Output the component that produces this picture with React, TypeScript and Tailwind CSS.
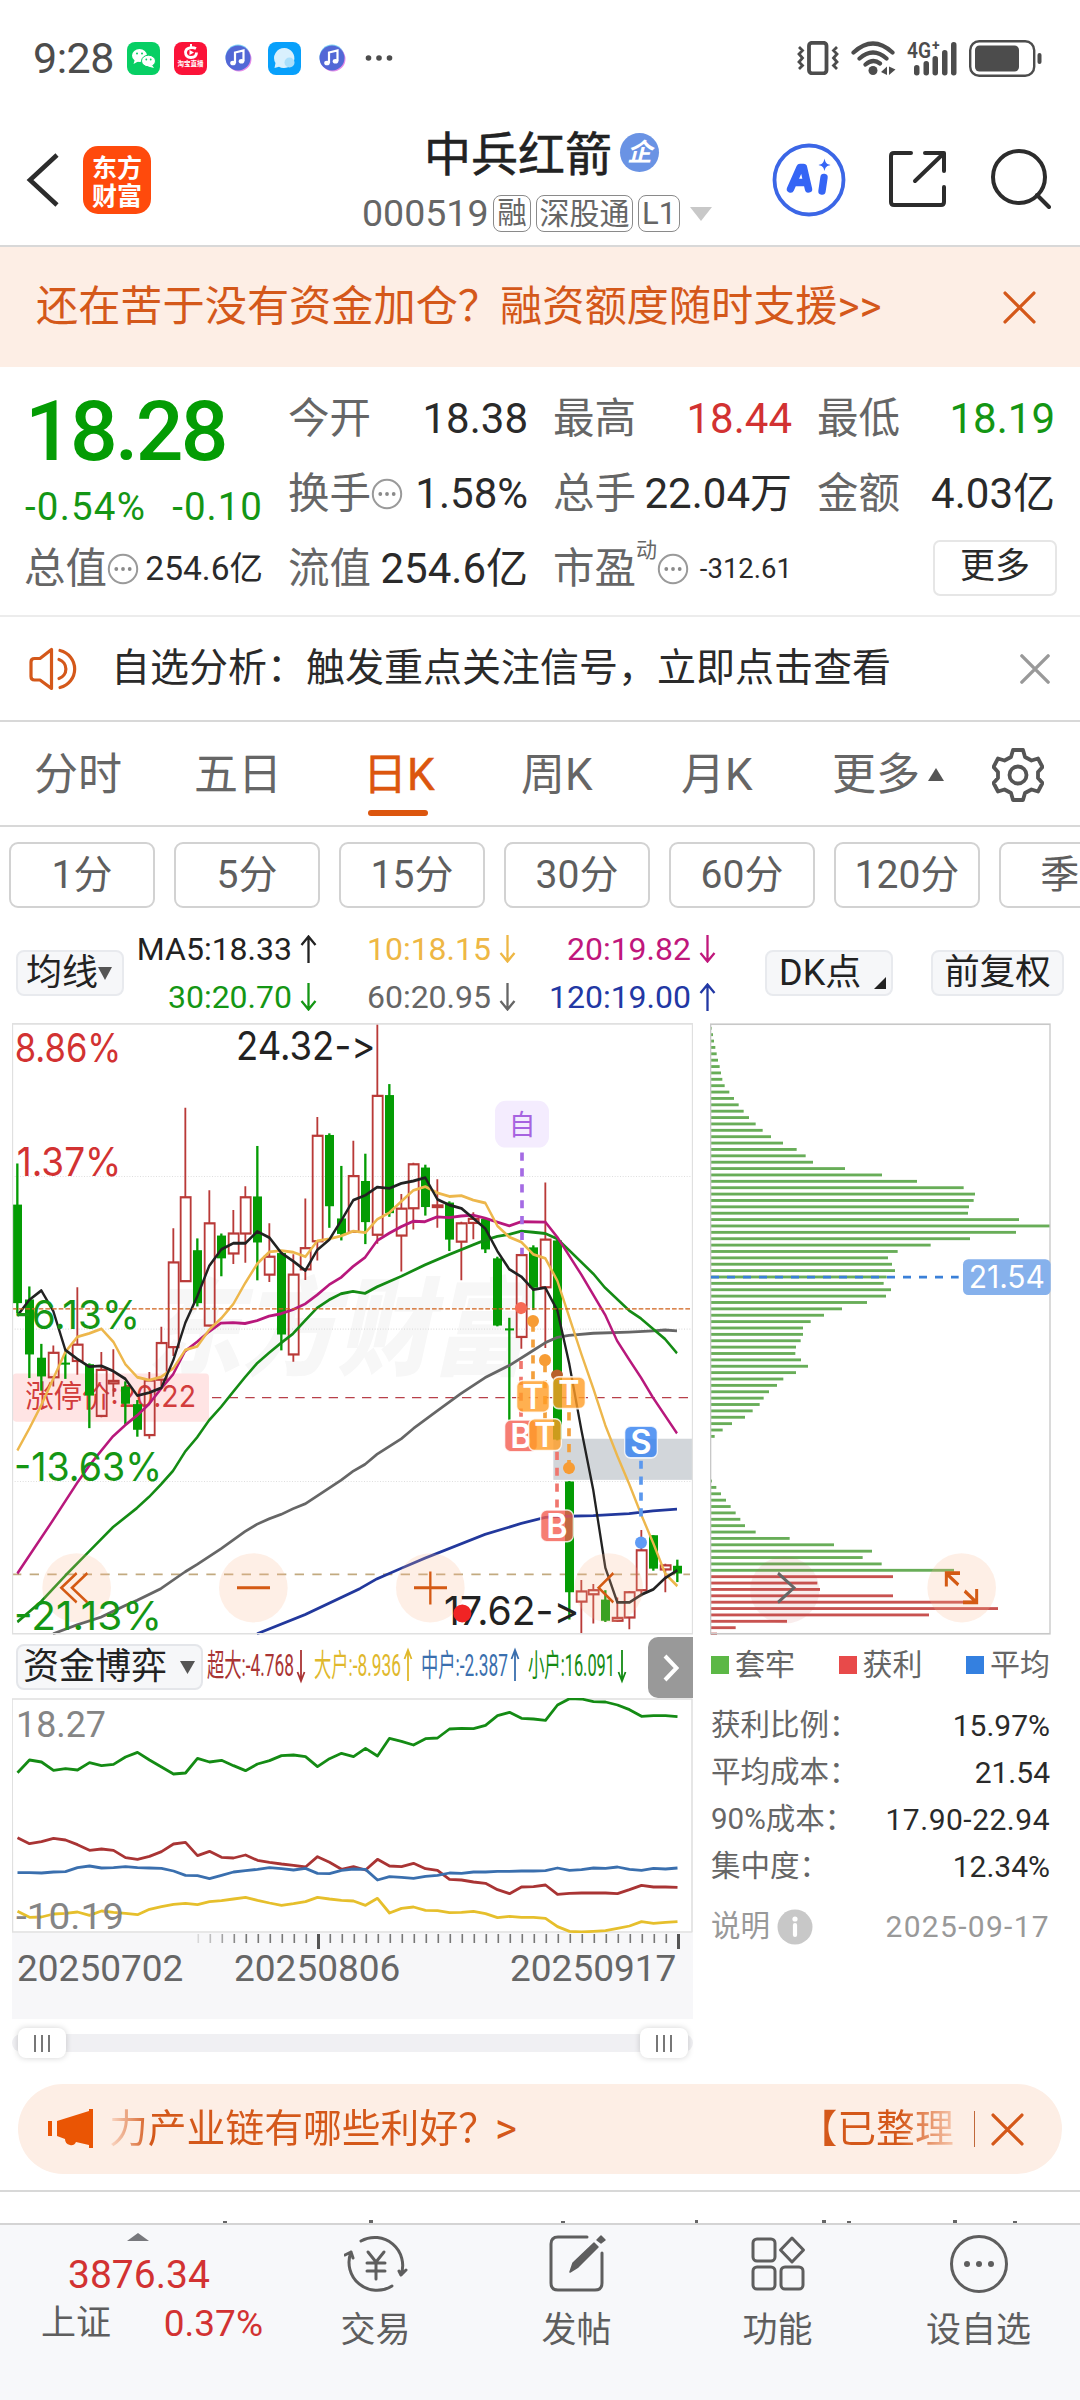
import React from "react";

type Point = [number, number];

/* ---------- chart data (chart units, 36 units per trading day) ---------- */

// kind, high, body top, body bottom, low
const CANDLES: [string, number, number, number, number][] = [
  ["g", 377, 478, 720, 745], ["g", 679, 711, 846, 904], ["g", 820, 854, 900, 935], ["r", 824, 842, 902, 925],
  ["g", 838, 866, 871, 906], ["r", 681, 822, 862, 896], ["g", 868, 870, 947, 1027], ["r", 840, 884, 997, 1000],
  ["r", 833, 911, 917, 950], ["g", 912, 925, 967, 1018], ["g", 958, 968, 1031, 1048], ["r", 889, 910, 1044, 1053],
  ["r", 778, 818, 908, 925], ["r", 536, 620, 828, 850], ["r", 240, 460, 666, 668], ["g", 561, 590, 720, 728],
  ["r", 443, 524, 775, 777], ["g", 549, 554, 610, 654], ["r", 491, 549, 598, 624], ["r", 433, 460, 549, 621],
  ["g", 334, 458, 571, 664], ["r", 524, 606, 650, 668], ["g", 590, 597, 797, 836], ["r", 600, 650, 846, 864],
  ["r", 463, 585, 637, 663], ["r", 263, 309, 568, 615], ["g", 303, 307, 482, 535], ["g", 383, 512, 550, 566],
  ["r", 321, 408, 545, 547], ["g", 353, 420, 521, 575], ["r", 34, 211, 552, 574], ["g", 182, 209, 499, 508],
  ["r", 452, 488, 554, 642], ["r", 375, 379, 487, 539], ["g", 380, 387, 484, 505], ["r", 416, 480, 484, 535],
  ["g", 470, 473, 564, 592], ["r", 520, 524, 569, 664], ["r", 497, 513, 523, 563], ["g", 513, 513, 588, 597],
  ["g", 606, 610, 775, 777], ["g", 756, 782, 787, 1009], ["r", 600, 602, 803, 832], ["g", 578, 583, 682, 737],
  ["r", 424, 564, 681, 830], ["g", 562, 566, 1055, 1057], ["g", 1157, 1158, 1430, 1497], ["r", 1400, 1428, 1453, 1532],
  ["r", 1410, 1425, 1435, 1507], ["g", 1425, 1448, 1500, 1503], ["r", 1443, 1493, 1500, 1502], ["r", 1427, 1430, 1492, 1521],
  ["r", 1277, 1327, 1425, 1440], ["g", 1290, 1290, 1372, 1377], ["r", 1360, 1364, 1374, 1430], ["g", 1350, 1365, 1384, 1405],
];

const MA5 = [751, 712, 689, 740, 835, 857, 876, 874, 887, 906, 947, 940, 928, 860, 768, 703, 628, 588, 573, 573, 544, 559, 597, 617, 640, 589, 564, 517, 467, 455, 435, 438, 426, 420, 412, 465, 479, 487, 512, 537, 592, 637, 655, 687, 682, 738, 870, 1031, 1180, 1370, 1455, 1455, 1436, 1423, 1395, 1376];
const MA10 = [1082, 1028, 970, 905, 840, 803, 794, 783, 815, 870, 902, 909, 901, 880, 835, 826, 785, 757, 722, 670, 623, 594, 591, 595, 606, 567, 562, 555, 543, 547, 514, 498, 470, 443, 434, 449, 458, 456, 467, 474, 530, 558, 570, 600, 610, 665, 755, 845, 930, 1020, 1095, 1165, 1240, 1310, 1385, 1415];
const MA20: Point[] = [[52, 1384], [159, 1253], [231, 1162], [267, 1120], [303, 1083], [339, 1047], [375, 1020], [411, 996], [447, 968], [483, 930], [519, 895], [555, 838], [591, 815], [627, 790], [663, 769], [699, 768], [735, 770], [771, 763], [807, 752], [843, 746], [879, 736], [915, 722], [951, 700], [987, 675], [1023, 657], [1059, 630], [1095, 608], [1131, 567], [1168, 548], [1204, 532], [1239, 519], [1275, 520], [1311, 508], [1347, 510], [1383, 506], [1419, 504], [1455, 511], [1492, 521], [1528, 530], [1564, 520], [1636, 521], [1672, 558], [1744, 650], [1815, 748], [1851, 812], [1887, 858], [1923, 903], [1959, 952], [2031, 1040]];
const MA30: Point[] = [[52, 1503], [123, 1453], [195, 1390], [267, 1330], [339, 1270], [411, 1223], [447, 1196], [483, 1165], [519, 1132], [555, 1085], [591, 1050], [627, 1008], [663, 975], [699, 938], [735, 902], [771, 868], [807, 842], [843, 818], [879, 795], [915, 763], [951, 732], [987, 712], [1023, 697], [1059, 691], [1095, 696], [1131, 680], [1204, 654], [1275, 626], [1347, 601], [1419, 577], [1455, 565], [1492, 556], [1528, 551], [1564, 543], [1600, 546], [1636, 549], [1672, 562], [1707, 590], [1780, 648], [1815, 682], [1887, 738], [1923, 758], [1959, 783], [1995, 808], [2031, 843]];
const MA60: Point[] = [[159, 1532], [231, 1510], [303, 1491], [375, 1463], [411, 1450], [483, 1421], [555, 1380], [591, 1362], [663, 1323], [735, 1281], [771, 1263], [807, 1250], [843, 1239], [879, 1225], [915, 1213], [1023, 1155], [1059, 1133], [1095, 1116], [1131, 1091], [1204, 1053], [1240, 1028], [1311, 985], [1383, 942], [1455, 903], [1528, 873], [1600, 836], [1636, 817], [1672, 804], [1707, 799], [1780, 794], [1887, 791], [1959, 788], [1995, 786], [2031, 788]];
const MA120: Point[] = [[771, 1532], [915, 1485], [1080, 1421], [1131, 1397], [1204, 1371], [1275, 1346], [1455, 1288], [1564, 1261], [1636, 1246], [1672, 1244], [1780, 1242], [1887, 1237], [1959, 1230], [2031, 1226]];

const CHIPS = [65, 69, 72, 76, 80, 84, 89, 93, 97, 104, 118, 132, 146, 161, 177, 197, 218, 243, 279, 320, 347, 369, 465, 576, 681, 821, 855, 851, 837, 834, 987, 1080, 978, 840, 722, 623, 594, 606, 615, 590, 581, 603, 588, 531, 456, 402, 362, 339, 339, 332, 318, 316, 333, 354, 318, 280, 261, 237, 221, 209, 188, 165, 126, 98, 74, 0, 0, 0, 0, 0, 0, 66, 79, 93, 108, 122, 137, 151, 165, 197, 299, 432, 546, 518, 575, 792, 609, 382, 390, 609, 850, 924, 717, 291, 137, 81];

const FLOW = [
  { color: "#a93434", v: [623, 641, 635, 625, 630, 644, 661, 657, 661, 683, 688, 679, 665, 642, 637, 677, 664, 682, 684, 675, 691, 697, 702, 706, 711, 680, 697, 718, 710, 720, 688, 708, 710, 700, 716, 721, 748, 750, 756, 760, 779, 791, 771, 770, 765, 793, 790, 789, 789, 789, 791, 779, 766, 771, 771, 772] },
  { color: "#3a6fae", v: [728, 728, 729, 726, 725, 713, 708, 714, 713, 710, 713, 714, 715, 723, 736, 737, 746, 736, 726, 722, 718, 713, 716, 720, 715, 730, 731, 721, 717, 718, 750, 740, 742, 745, 739, 736, 729, 730, 726, 726, 724, 724, 723, 723, 722, 714, 721, 719, 714, 715, 711, 718, 721, 715, 717, 714] },
  { color: "#e6bf2c", v: [844, 862, 861, 852, 850, 846, 856, 843, 847, 850, 854, 838, 830, 823, 820, 824, 815, 812, 807, 802, 811, 819, 826, 821, 815, 802, 807, 811, 813, 826, 805, 849, 835, 831, 841, 842, 848, 847, 844, 851, 863, 859, 862, 862, 865, 890, 904, 906, 904, 902, 895, 888, 875, 880, 877, 875] },
  { color: "#148b14", v: [428, 390, 396, 421, 416, 420, 398, 407, 403, 381, 367, 390, 411, 432, 429, 385, 396, 391, 407, 422, 402, 392, 377, 375, 380, 410, 386, 370, 380, 355, 378, 325, 334, 345, 326, 324, 297, 295, 296, 286, 257, 247, 265, 267, 271, 225, 206, 207, 215, 216, 225, 239, 259, 257, 257, 260] },
];

const daily = (v: number[]): Point[] => v.map((y, i) => [52 + 36 * i, y]);
const toPoints = (p: Point[]) => p.map((q) => q.join(",")).join(" ");

/* ---------- small pieces ---------- */

function Cross({ className, size, width = 3.2 }: { className: string; size: number; width?: number }) {
  return (
    <svg className={className} width={size} height={size} viewBox="0 0 32 32" fill="none" stroke="currentColor" strokeWidth={width} strokeLinecap="round">
      <path d="M2 2L30 30M30 2L2 30" />
    </svg>
  );
}

function Dots() {
  return (
    <svg className="shrink-0" width="32" height="32" viewBox="0 0 32 32">
      <circle cx="16" cy="16" r="14.200" fill="none" stroke="#9a9a9a" strokeWidth="2" />
      <circle cx="9.300" cy="16" r="1.900" fill="#8a8a8a" />
      <circle cx="16" cy="16" r="1.900" fill="#8a8a8a" />
      <circle cx="22.700" cy="16" r="1.900" fill="#8a8a8a" />
    </svg>
  );
}

function Arrow({ up }: { up: boolean }) {
  return (
    <svg className="ml-2 shrink-0" width="17" height="28" viewBox="0 0 17 28" fill="none" stroke="currentColor" strokeWidth="2.300">
      {up ? <path d="M8.5 28V1.5M1.5 10L8.5 1.5L15.5 10" /> : <path d="M8.5 0V26.500M1.5 18L8.5 26.500L15.5 18" />}
    </svg>
  );
}

function MusicIcon({ className }: { className: string }) {
  return (
    <svg className={className} width="28" height="28" viewBox="0 0 28 28">
      <circle cx="14" cy="13" r="12.500" fill="#7fd4f5" />
      <circle cx="15" cy="15" r="12.500" fill="#e58be8" />
      <circle cx="14" cy="14" r="12.500" fill="#5268d6" />
      <path d="M11 19V8.500L19.500 6.500V17" fill="none" stroke="#fff" strokeWidth="2.200" />
      <ellipse cx="9" cy="19" rx="2.800" ry="2.300" fill="#fff" />
      <ellipse cx="17.500" cy="17.200" rx="2.800" ry="2.300" fill="#fff" />
    </svg>
  );
}

/* ---------- top ---------- */

function StatusBar() {
  return (
    <div className="flex h-[116px] shrink-0 items-center text-[#4c4c4c]">
      <span className="ml-[33px] w-[83px] text-[43px] leading-none whitespace-nowrap tracking-[-0.5px]">9:28</span>
      <svg className="ml-[11px]" width="33" height="33" viewBox="0 0 33 33">
        <rect width="33" height="33" rx="8" fill="#07cf64" />
        <ellipse cx="12.500" cy="13.500" rx="7.500" ry="6.500" fill="#fff" />
        <path d="M8 17L6.500 22L12 19Z" fill="#fff" />
        <ellipse cx="21.500" cy="19" rx="7" ry="5.800" fill="#fff" stroke="#07cf64" strokeWidth="1" />
        <path d="M25 23L27 26L21 24.500Z" fill="#fff" />
        <circle cx="10" cy="11.500" r="1" fill="#07cf64" /><circle cx="15" cy="11.500" r="1" fill="#07cf64" />
        <circle cx="19.300" cy="17.500" r=".9" fill="#07cf64" /><circle cx="23.700" cy="17.500" r=".9" fill="#07cf64" />
      </svg>
      <div className="ml-[14px] flex size-[33px] flex-col items-center rounded-[8px] bg-[#fb1339] text-white">
        <svg className="mt-[2px]" width="16" height="15" viewBox="0 0 16 15" fill="none" stroke="#fff">
          <path d="M13 4.500C10 3 3 3 2.500 8C2.500 13 6 13.500 8 13.500C11 13.500 13.500 12 13.500 8.500" strokeWidth="2.800" />
          <path d="M6.500 6L11 8.500L6.500 11Z" fill="#fff" stroke="none" />
          <path d="M8 0V4" strokeWidth="2" />
        </svg>
        <span className="mt-px text-[6.500px] font-bold leading-[8px] whitespace-nowrap">淘宝直播</span>
      </div>
      <MusicIcon className="ml-[17px]" />
      <svg className="ml-[16px]" width="33" height="33" viewBox="0 0 33 33">
        <rect width="33" height="33" rx="8" fill="#08a0fb" />
        <path d="M16.500 6A10.300 10 0 1 1 11 24.700L6.500 26L7.500 21A10.300 10 0 0 1 16.500 6Z" fill="#d9f0fd" />
        <circle cx="21.500" cy="20.500" r="5" fill="#aadffb" />
      </svg>
      <MusicIcon className="ml-[17px]" />
      <svg className="ml-[19px]" width="28" height="8" viewBox="0 0 28 8" fill="#4c4c4c">
        <circle cx="3.500" cy="4" r="2.800" /><circle cx="14" cy="4" r="2.800" /><circle cx="24.500" cy="4" r="2.800" />
      </svg>
      <svg className="ml-auto" width="42" height="34" viewBox="0 0 42 34" fill="none" stroke="#4c4c4c" strokeWidth="2.800">
        <rect x="12" y="1.800" width="17.500" height="30.500" rx="3" strokeWidth="3.800" />
        <path d="M2 6L5.500 9.500L2 13L5.500 17L2 21L5.500 24.500L2 28M40 6L36.500 9.500L40 13L36.500 17L40 21L36.500 24.500L40 28" />
      </svg>
      <svg className="ml-[12px]" width="45" height="35" viewBox="0 0 45 35" fill="none" stroke="#4c4c4c" strokeWidth="4.200" strokeLinecap="round">
        <path d="M2.500 11.500Q22 -6.500 41.500 11.500M8.500 17.500Q22 5.500 35.500 17.500M14.500 23.500Q22 17 29 22.500" />
        <circle cx="22" cy="29.500" r="4.500" fill="#4c4c4c" stroke="none" />
        <path d="M36 25.500V34L30 31ZM38 34V25.500L44.500 28.500Z" fill="#4c4c4c" stroke="none" />
      </svg>
      <svg className="ml-[11px] overflow-visible" width="50" height="35" viewBox="0 0 50 35" fill="#4c4c4c">
        <rect x="7" y="24" width="5.500" height="10.500" rx="2.700" /><rect x="16.500" y="20" width="5.500" height="14.500" rx="2.700" />
        <rect x="25.500" y="15" width="5.500" height="19.500" rx="2.700" /><rect x="35" y="9" width="5.500" height="25.500" rx="2.700" />
        <rect x="44" y="1" width="5.500" height="33.500" rx="2.700" />
        <text x="0" y="17" fontSize="22" fontWeight="600" textLength="24" lengthAdjust="spacingAndGlyphs">4G</text>
        <text x="25" y="9" fontSize="14" fontWeight="700">+</text>
      </svg>
      <svg className="mr-[37px] ml-[12px]" width="74" height="37" viewBox="0 0 74 37">
        <rect x="1.200" y="1.200" width="64" height="34.600" rx="9" fill="none" stroke="#4c4c4c" strokeWidth="2.400" />
        <rect x="6" y="5.500" width="44" height="26" rx="4.500" fill="#4c4c4c" />
        <rect x="68.500" y="13" width="4" height="11" rx="2" fill="#4c4c4c" />
      </svg>
    </div>
  );
}

function Header() {
  return (
    <div className="flex h-[131px] shrink-0 border-b-2 border-[#d8d8d8] text-[#222]">
      <svg className="mt-[37px] ml-[26px]" width="34" height="54" viewBox="0 0 34 54" fill="none" stroke="#2c2c2c" strokeWidth="4.600">
        <path d="M31 2L4 27L31 52" />
      </svg>
      <div className="mt-[30px] ml-[23px] flex h-[68px] w-[68px] flex-col items-center justify-center rounded-[15px] bg-[#ff4a0c] text-[25px] leading-[28px] font-bold text-white [font-family:'Noto_Sans_CJK_SC',sans-serif]">
        <span>东方</span>
        <span>财富</span>
      </div>
      <div className="ml-[211px] flex w-[362px] flex-col">
        <div className="flex items-center pl-[62px]">
          <span className="mt-[12px] text-[47px] leading-[54px] whitespace-nowrap [-webkit-text-stroke:0.5px_#222]">中兵红箭</span>
          <span className="mt-[6px] ml-[8px] flex size-[39px] items-center justify-center rounded-full bg-[#6a93e4] text-[25px] leading-none font-bold text-white italic">企</span>
        </div>
        <div className="mt-[13px] flex items-center text-[#666]">
          <span className="w-[131px] text-[37.500px] leading-none">000519</span>
          <span className="flex h-[37px] w-[38px] items-center justify-center rounded-[8px] border border-[#8a8a8a] text-[29.500px] leading-none">融</span>
          <span className="ml-[5px] flex h-[37px] w-[97px] items-center justify-center rounded-[8px] border border-[#8a8a8a] text-[30px] leading-none whitespace-nowrap">深股通</span>
          <span className="ml-[5px] flex h-[37px] w-[42px] items-center justify-center rounded-[8px] border border-[#8a8a8a] text-[31px] leading-none">L1</span>
          <svg className="ml-[10px]" width="22" height="14" viewBox="0 0 22 14"><path d="M0 0H22L11 14Z" fill="#c8c8c8" /></svg>
        </div>
      </div>
      <svg className="mt-[27px] ml-[48px]" width="74" height="74" viewBox="0 0 74 74">
        <circle cx="37" cy="37" r="34.500" fill="none" stroke="#3b66e6" strokeWidth="3.800" />
        <g fill="none" stroke="#3565f5" strokeWidth="7.400" strokeLinejoin="round" strokeLinecap="round">
          <path d="M18.500 46L28 24.500H31.500L36.500 46M25 39.500H33" />
          <path d="M52 34.500L50 48" />
        </g>
        <path d="M52.500 15.500C53.500 20 54.500 21 58.500 22C54.500 23 53.500 24 52.500 28C51.500 24 50.500 23 46.500 22C50.500 21 51.500 20 52.500 15.500Z" fill="#3565f5" />
      </svg>
      <svg className="mt-[34px] ml-[42px]" width="60" height="60" viewBox="0 0 60 60" fill="none" stroke="#2c2c2c" strokeWidth="4" strokeLinecap="round" strokeLinejoin="round">
        <path d="M23 3H6Q3 3 3 6V52Q3 55 6 55H53Q56 55 56 52V37M37 3H56V21M55 4L27 31" />
      </svg>
      <svg className="mt-[32px] ml-[41px]" width="62" height="62" viewBox="0 0 62 62" fill="none" stroke="#2c2c2c" strokeWidth="4" strokeLinecap="round">
        <circle cx="30" cy="29" r="26" />
        <path d="M48 47L60 59" />
      </svg>
    </div>
  );
}

/* ---------- quotes ---------- */

function Quote({ label, value, tone = "text-[#2a2a2a]", children }: { label: string; value: string; tone?: string; children?: React.ReactNode }) {
  return (
    <div className="flex items-center">
      <span className="ml-[-1px] text-[41.500px] text-[#666]">{label}</span>
      {children}
      <span className={"ml-auto text-[42px] " + tone}>{value}</span>
    </div>
  );
}

function Quotes() {
  return (
    <div className="flex h-[250px] shrink-0 gap-[26px] border-b-2 border-[#ececec] pl-[25px] leading-none whitespace-nowrap">
      <div className="w-[238px]">
        <div className="mt-[21px] h-[88px] text-[84px] leading-[88px] font-medium tracking-[-2.700px] text-[#049c04]">18.28</div>
        <div className="mt-[11px] flex h-[40px] items-center justify-between text-[38.500px] text-[#149614]">
          <span className="tracking-[1.200px]">-0.54%</span>
          <span className="tracking-[1px]">-0.10</span>
        </div>
        <div className="mt-[20px] flex h-[44px] items-center">
          <span className="ml-[-1px] text-[41.500px] text-[#666]">总值</span>
          <Dots />
          <span className="ml-auto text-[33.500px] text-[#2a2a2a]">254.6亿</span>
        </div>
      </div>
      <div className="grid h-[230px] w-[766px] grid-cols-[239px_238px_237px] grid-rows-[75px_75px_75px] gap-x-[26px] pt-[14px]">
        <Quote label="今开" value="18.38" />
        <Quote label="最高" value="18.44" tone="text-[#d23232]" />
        <Quote label="最低" value="18.19" tone="text-[#149614]" />
        <Quote label="换手" value="1.58%"><Dots /></Quote>
        <Quote label="总手" value="22.04万" />
        <Quote label="金额" value="4.03亿" />
        <Quote label="流值" value="254.6亿" />
        <div className="flex items-center">
          <span className="ml-[-1px] text-[41.500px] text-[#666]">市盈</span>
          <span className="mb-[36px] text-[21px] text-[#666]">动</span>
          <Dots />
          <span className="ml-auto text-[27.500px] text-[#2a2a2a]">-312.61</span>
        </div>
        <div className="flex items-center justify-end">
          <span className="mr-[-2px] mb-[2px] flex h-[56px] w-[124px] items-center justify-center rounded-[7px] border-2 border-[#e6e6e6] pb-[3px] text-[35px] text-[#2a2a2a]">更多</span>
        </div>
      </div>
    </div>
  );
}

function Notice() {
  return (
    <div className="flex h-[105px] shrink-0 items-center border-b-2 border-[#d8d8d8]">
      <svg className="ml-[29px]" width="52" height="44" viewBox="0 0 52 44" fill="none" stroke="#d4581a" strokeWidth="3.200" strokeLinecap="round" strokeLinejoin="round">
        <path d="M2 15Q2 11.500 5.500 11.500H11L22.500 2.500V41.500L11 33H5.500Q2 33 2 29.500Z" />
        <path d="M30 12.500A10 10 0 0 1 30 31.500M31 3.500A19 19 0 0 1 31 40.500" />
      </svg>
      <span className="ml-[30px] text-[39px] leading-none whitespace-nowrap text-[#2a2a2a]">自选分析：触发重点关注信号，立即点击查看</span>
      <Cross className="mr-[30px] ml-auto text-[#999]" size={30} width={3.600} />
    </div>
  );
}

function Tabs() {
  return (
    <div className="flex h-[105px] shrink-0 items-center border-b-2 border-[#d8d8d8] pt-[2px] text-[44px] leading-none whitespace-nowrap text-[#666]">
      <span className="ml-[34px] w-[160px]">分时</span>
      <span className="w-[169px]">五日</span>
      <span className="relative w-[158px] text-[#dc560e] [-webkit-text-stroke:0.5px_#dc560e]">
        日K
        <span className="absolute bottom-[-19px] left-[5px] h-[6px] w-[60px] rounded-full bg-[#dc560e]" />
      </span>
      <span className="w-[160px]">周K</span>
      <span className="w-[151px]">月K</span>
      <span>更多</span>
      <svg className="ml-[8px]" width="16" height="13" viewBox="0 0 16 13"><path d="M0 13H16L8 0Z" fill="#555" /></svg>
      <svg className="ml-[48px]" width="52" height="54" viewBox="0 0 52 54" fill="none" stroke="#555" strokeWidth="3.800" strokeLinejoin="round">
        <path d="M21 2H31L33 9L39.500 12.500L46 10.500L50.500 19L46 24V30L50.500 35L46 43.500L39.500 41.500L33 45L31 52H21L19 45L12.500 41.500L6 43.500L1.500 35L6 30V24L1.500 19L6 10.500L12.500 12.500L19 9Z" />
        <circle cx="26" cy="27" r="8.500" />
      </svg>
    </div>
  );
}

function Periods() {
  return (
    <div className="flex shrink-0 gap-[19px] overflow-hidden pt-[15px] pl-[9px] text-[39px] leading-none whitespace-nowrap text-[#5e5e5e]">
      {["1分", "5分", "15分", "30分", "60分", "120分", "季K"].map((p) => (
        <span key={p} className="flex h-[66px] w-[146px] shrink-0 items-center justify-center rounded-[9px] border-2 border-[#d2d2d2]">{p}</span>
      ))}
    </div>
  );
}

function Averages() {
  const items: [string, boolean, string][] = [
    ["MA5:18.33", true, "text-[#222]"], ["10:18.15", false, "text-[#eeb744]"], ["20:19.82", false, "text-[#c0177c]"],
    ["30:20.70", false, "text-[#149614]"], ["60:20.95", false, "text-[#666]"], ["120:19.00", true, "text-[#2238a4]"],
  ];
  return (
    <div className="mt-[17px] flex h-[98px] shrink-0 leading-none whitespace-nowrap text-[#222]">
      <div className="mt-[25px] ml-[16px] flex h-[46px] w-[108px] items-center rounded-[8px] border-2 border-[#e8eaee] bg-[#f6f7f9] pl-[8px] text-[36px]">
        均线
        <svg width="14" height="13" viewBox="0 0 14 13"><path d="M0 0H14L7 13Z" fill="#555" /></svg>
      </div>
      <div className="ml-[3px] grid w-[590px] grid-cols-[190px_199px_200px] grid-rows-[48px_48px] text-[32px]">
        {items.map(([t, up, c]) => (
          <span key={t} className={"flex items-center justify-end " + c}>{t}<Arrow up={up} /></span>
        ))}
      </div>
      <div className="relative mt-[25px] ml-[48px] flex h-[46px] w-[128px] items-center rounded-[8px] border-2 border-[#e8eaee] bg-[#f6f7f9] pl-[12px] text-[36px]">
        DK点
        <svg className="absolute right-[5px] bottom-[5px]" width="12" height="12" viewBox="0 0 12 12"><path d="M12 0V12H0Z" fill="#222" /></svg>
      </div>
      <div className="mt-[25px] ml-[38px] flex h-[46px] w-[133px] items-center justify-center rounded-[8px] border-2 border-[#e8eaee] bg-[#f6f7f9] text-[35.500px]">前复权</div>
    </div>
  );
}

/* ---------- charts ---------- */

function Marker({ x, y, letter, fill }: { x: number; y: number; letter: string; fill: string }) {
  return (
    <g>
      <rect x={x - 49} y={y - 39} width="98" height="78" rx="18" ry="15" fill={fill} fillOpacity="0.8" stroke="#fff" strokeWidth="4" strokeOpacity=".8" />
      <text x={x - 32} y={y + 30} textLength="64" lengthAdjust="spacingAndGlyphs" fontSize="84" fontWeight="600" fill="#fff">{letter}</text>
    </g>
  );
}

function KLine() {
  return (
    <svg className="block" width="681" height="612" viewBox="36 32 2043 1503" preserveAspectRatio="none" fontFamily="Inter, 'Noto Sans CJK SC', sans-serif" strokeLinejoin="round">
      <text x="440" y="878" fontSize="262" fontWeight="900" fontStyle="italic" fill="#f7f7f7" textLength="1140" lengthAdjust="spacingAndGlyphs" fontFamily="'Noto Sans CJK SC', sans-serif">东方财富</text>
      <g stroke="#dedede" strokeWidth="3" strokeDasharray="3 5">
        <path d="M36 409H2076M36 784H2076M36 1158H2076" />
      </g>
      <rect x="1660" y="1053" width="418" height="101" fill="#d2d6da" />
      <path d="M36 952H2070" stroke="#b8404a" strokeWidth="3" strokeDasharray="28 22" />
      <path d="M36 1386H2070" stroke="#c2aa80" strokeWidth="4" strokeDasharray="28 25" />
      <rect x="38" y="893" width="589" height="118" rx="10" fill="#ffe4e4" />
      <text x="76" y="976" fontSize="74" fill="#d23c3c" textLength="512" lengthAdjust="spacingAndGlyphs">涨停价:20.22</text>
      {CANDLES.map(([k, hi, top, bot, lo], i) => {
        const x = 52 + 36 * i;
        return k === "g" ? (
          <g key={i} fill="#049c04">
            <rect x={x - 3.5} y={hi} width="7" height={lo - hi} />
            <rect x={x - 13} y={top} width="27" height={bot - top} />
          </g>
        ) : (
          <g key={i} stroke="#b93a38" strokeWidth="5.500" fill="none">
            <path d={`M${x} ${hi}V${top}M${x} ${bot}V${lo}`} />
            <rect x={x - 14} y={top} width="30" height={bot - top} strokeLinejoin="miter" />
          </g>
        );
      })}
      <g fill="none" strokeWidth="7">
        <polyline points={toPoints(MA120)} stroke="#22389c" />
        <polyline points={toPoints(MA60)} stroke="#666" />
        <polyline points={toPoints(MA30)} stroke="#148b14" />
        <polyline points={toPoints(MA20)} stroke="#b8187c" />
        <polyline points={toPoints(daily(MA10))} stroke="#edb74c" />
        <polyline points={toPoints(daily(MA5))} stroke="#222" />
      </g>
      <path d="M36 734H2078" stroke="#d06018" strokeWidth="3" strokeDasharray="14 6" />

      <g fill="#f9b78f" fillOpacity="0.22">
        <ellipse cx="230" cy="1419" rx="103" ry="85" />
        <ellipse cx="760" cy="1419" rx="103" ry="85" />
        <ellipse cx="1291" cy="1419" rx="103" ry="85" />
        <ellipse cx="1826" cy="1419" rx="103" ry="85" />
      </g>
      <g fill="none" stroke="#d45a14" strokeWidth="7" strokeLinejoin="miter">
        <path d="M230 1383L184 1419L230 1455M262 1383L216 1419L262 1455" />
        <path d="M711 1419H810M1242 1419H1341M1291 1379V1460" />
        <path d="M1840 1383L1796 1419L1840 1455" />
      </g>

      <g fontSize="96" fill="#d23232">
        <text x="44" y="127" textLength="320" lengthAdjust="spacingAndGlyphs">8.86%</text>
        <text x="50" y="408" textLength="314" lengthAdjust="spacingAndGlyphs">1.37%</text>
      </g>
      <g fontSize="96" fill="#149614">
        <text x="42" y="783" textLength="378" lengthAdjust="spacingAndGlyphs">-6.13%</text>
        <text x="42" y="1158" textLength="444" lengthAdjust="spacingAndGlyphs">-13.63%</text>
        <text x="42" y="1523" textLength="444" lengthAdjust="spacingAndGlyphs">-21.13%</text>
      </g>
      <g className="[font-feature-settings:'calt'_0]" fontSize="96" fill="#222">
        <text x="708" y="122" textLength="418" lengthAdjust="spacingAndGlyphs">24.32-&gt;</text>
        <text x="1332" y="1511" textLength="406" lengthAdjust="spacingAndGlyphs">17.62-&gt;</text>
      </g>
      <ellipse cx="1387" cy="1482" rx="27" ry="22" fill="#f02424" />

      <rect x="1485" y="223" width="162" height="115" rx="32" ry="27" fill="#f4ecfe" />
      <text x="1526" y="307" textLength="80" lengthAdjust="spacingAndGlyphs" fontSize="70" fill="#a763e0">自</text>
      <g fill="none" strokeWidth="11" strokeDasharray="20 19">
        <path d="M1566 350V600" stroke="#a56be4" />
        <path d="M1563 862V1005M1671 1085V1225" stroke="#f0766e" />
        <path d="M1599 770V908M1635 870V1005M1707 988V1118" stroke="#f3a03c" />
        <path d="M1923 1107V1245" stroke="#5b98ee" />
      </g>
      <g>
        <ellipse cx="1563" cy="732" rx="18" ry="15" fill="#f76a54" />
        <ellipse cx="1599" cy="764" rx="18" ry="15" fill="#f79c34" />
        <ellipse cx="1635" cy="860" rx="18" ry="15" fill="#f79c34" />
        <ellipse cx="1671" cy="896" rx="18" ry="13" fill="#b8602c" />
        <ellipse cx="1707" cy="1125" rx="18" ry="15" fill="#f79c34" />
        <ellipse cx="1923" cy="1308" rx="18" ry="15" fill="#5f9bf5" />
      </g>
      <Marker x={1563} y={1046} letter="B" fill="#f45c50" />
      <Marker x={1671} y={1267} letter="B" fill="#f45c50" />
      <Marker x={1599} y={949} letter="T" fill="#ff9c24" />
      <Marker x={1635} y={1043} letter="T" fill="#ff9c24" />
      <Marker x={1707} y={940} letter="T" fill="#ff9c24" />
      <Marker x={1923} y={1061} letter="S" fill="#327ff0" />
      <rect x="37.500" y="34" width="2040" height="1498" fill="none" stroke="#e0e0e0" strokeWidth="4" />
    </svg>
  );
}

function CostChart() {
  return (
    <svg className="block" width="342" height="612" viewBox="60 32 1026 1503" preserveAspectRatio="none" fontFamily="Inter, sans-serif">
      {CHIPS.map((w, i) => (
        <rect key={i} x="63" y={45 + 15.66 * i - 3.5} width={Math.max(0, w - 63)} height="7" fill={i > 85 ? "#c85250" : "#68ad58"} />
      ))}
      <rect x="62" y="35" width="1018" height="1497" fill="none" stroke="#c8c8c8" strokeWidth="4" />
      <path d="M63 656H806" stroke="#3a80d8" strokeWidth="7" strokeDasharray="24 24" />
      <rect x="819" y="612" width="263" height="88" rx="16" ry="13" fill="#86b1ec" />
      <text x="836" y="682" fontSize="76" fill="#fff" textLength="229" lengthAdjust="spacingAndGlyphs">21.54</text>
      <ellipse cx="284" cy="1425" rx="104" ry="82" fill="#c85250" fillOpacity="0.1" />
      <ellipse cx="815" cy="1419" rx="103" ry="85" fill="#f9b78f" fillOpacity="0.22" />
      <path d="M264 1383L312 1419L264 1455" fill="none" stroke="#666" strokeWidth="8" />
      <path d="M769 1416V1383H810M772 1386L805 1412M860 1422V1455H819M857 1453L824 1427" fill="none" stroke="#d45a14" strokeWidth="9" />
    </svg>
  );
}

function FlowChart() {
  return (
    <svg className="block" width="681" height="235" viewBox="12 1698 681 235" strokeLinejoin="round">
      <path d="M12 1699H692V1932H12.500Z" fill="none" stroke="#e0e0e0" strokeWidth="1.600" />
      {FLOW.map((s) => (
        <polyline key={s.color} fill="none" stroke={s.color} strokeWidth="2.800" points={s.v.map((y, i) => `${17.5 + 12 * i},${1630 + y / 3}`).join(" ")} />
      ))}
      <g fontSize="37" fill="#858585">
        <text x="16" y="1737" textLength="90" lengthAdjust="spacingAndGlyphs">18.27</text>
        <text x="16" y="1929" textLength="108" lengthAdjust="spacingAndGlyphs">-10.19</text>
      </g>
    </svg>
  );
}

function Handle({ className }: { className: string }) {
  return (
    <div className={"absolute top-[-6px] flex h-[30px] w-[48px] items-center justify-center gap-[5px] rounded-[8px] bg-white shadow-[0_0_6px_rgba(0,0,0,0.18)] " + className}>
      <i className="h-[17px] w-[2px] bg-[#777]" /><i className="h-[17px] w-[2px] bg-[#777]" /><i className="h-[17px] w-[2px] bg-[#777]" />
    </div>
  );
}

function FlowLegend({ label, value, up, tone }: { label: string; value: string; up: boolean; tone: string }) {
  return (
    <span className={"block w-[107px] " + tone}>
      <svg width="100" height="40" viewBox="0 0 100 40">
        <text x="0" y="31" fontSize="31" fill="currentColor" textLength="87" lengthAdjust="spacingAndGlyphs">{label}:{value}</text>
        <path d={up ? "M94 36V5M90.500 14L94 5L97.500 14" : "M94 5V36M90.500 27L94 36L97.500 27"} fill="none" stroke="currentColor" strokeWidth="1.800" />
      </svg>
    </span>
  );
}

function FlowToolbar() {
  return (
    <div className="relative flex h-[63px] leading-none whitespace-nowrap">
      <div className="mt-[9px] ml-[4px] flex h-[46px] w-[187px] items-center rounded-[8px] border-2 border-[#e4e6ea] bg-[#f6f7f9] pl-[5px] text-[36px] text-[#222]">
        资金博弈
        <svg className="ml-[13px]" width="15" height="13" viewBox="0 0 15 13"><path d="M0 0H15L7.500 13Z" fill="#555" /></svg>
      </div>
      <div className="mt-[10px] ml-[4px] flex h-[40px]">
        <FlowLegend label="超大" value="-4.768" up={false} tone="text-[#a93434]" />
        <FlowLegend label="大户" value="-8.936" up tone="text-[#e0b82c]" />
        <FlowLegend label="中户" value="-2.387" up tone="text-[#3a6fae]" />
        <FlowLegend label="小户" value="16.091" up={false} tone="text-[#148b14]" />
      </div>
      <div className="absolute top-[2px] right-0 flex h-[61px] w-[45px] items-center justify-center rounded-l-[10px] bg-[#999]">
        <svg width="16" height="28" viewBox="0 0 16 28" fill="none" stroke="#fff" strokeWidth="4"><path d="M2 2L13.500 14L2 26" /></svg>
      </div>
    </div>
  );
}

function ChartPanel() {
  return (
    <div className="ml-[12px] w-[681px] leading-none">
      <KLine />
      <FlowToolbar />
      <FlowChart />
      <div className="h-[86px] bg-[#f7f7f9] text-[37px] text-[#666]">
        <svg className="block" width="681" height="17" viewBox="12 0 681 17">
          {Array.from({ length: 41 }, (_, k) => {
            const i = k + 15;
            const big = i === 25 || i === 55;
            return <rect key={i} x={(big ? 17 : 17.5) + 12 * i} y="1" width={big ? 3 : 1.6} height={big ? 15 : 9} fill={big ? "#555" : "#777"} opacity={Math.min(1, 0.25 + k * 0.2)} />;
          })}
        </svg>
        <div className="flex items-center pl-[5px]">
          <span className="w-[217px]">20250702</span>
          <span className="w-[276px]">20250806</span>
          <span>20250917</span>
        </div>
      </div>
      <div className="relative mt-[15px] h-[18px] rounded-full bg-[#f0f0f3]">
        <Handle className="left-[6px]" />
        <Handle className="right-[5px]" />
      </div>
    </div>
  );
}

function CostPanel() {
  const rows = [["获利比例：", "15.97%"], ["平均成本：", "21.54"], ["90%成本：", "17.90-22.94"], ["集中度：", "12.34%"]];
  const legend = [["套牢", "bg-[#5cb846]"], ["获利", "bg-[#e84a4a]"], ["平均", "bg-[#3480e0]"]];
  return (
    <div className="ml-[17px] w-[342px] leading-none whitespace-nowrap">
      <CostChart />
      <div className="mt-[10px] flex h-[40px] items-center justify-between pr-[2px] pl-[1px] text-[30px] text-[#666]">
        {legend.map(([l, c]) => (
          <span key={l} className="flex items-center gap-[6px]"><i className={"size-[18px] " + c} />{l}</span>
        ))}
      </div>
      <div className="mt-[17px] pr-[2px] pl-[1px] text-[30px]">
        {rows.map(([l, v]) => (
          <div key={l} className="flex h-[47px] items-center justify-between">
            <span className="text-[29.500px] text-[#666]">{l}</span>
            <span className={v.length > 6 ? "tracking-[0.500px] text-[#2a2a2a]" : "text-[#2a2a2a]"}>{v}</span>
          </div>
        ))}
        <div className="mt-[13px] flex h-[47px] items-center text-[#999]">
          <span className="text-[29.500px]">说明</span>
          <svg className="ml-[7px]" width="36" height="36" viewBox="0 0 36 36">
            <circle cx="18" cy="18" r="17.500" fill="#c8c8c8" />
            <circle cx="18" cy="10" r="2.600" fill="#fff" />
            <path d="M18 16V26" stroke="#fff" strokeWidth="4.200" strokeLinecap="round" />
          </svg>
          <span className="ml-auto tracking-[1.300px]">2025-09-17</span>
        </div>
      </div>
    </div>
  );
}

/* ---------- bottom ---------- */

function Promo() {
  return (
    <div className="mx-[18px] flex h-[90px] shrink-0 items-center rounded-full bg-[#fdeee5] text-[38.800px] leading-none whitespace-nowrap text-[#d4581a]">
      <svg className="ml-[30px]" width="46" height="40" viewBox="0 0 46 40" fill="#ea5504">
        <path d="M0 12H4V27H0ZM9 12L41 2V0H45V39H41V36L28 33Q26 37 22 36Q17 35 17 30L9 27Z" />
      </svg>
      <span className="ml-[15px] bg-[linear-gradient(90deg,#fbdccb_0,#d4581a_42px)] bg-clip-text py-2 text-transparent">力产业链有哪些利好？</span>
      <span className="ml-[-2px] text-[42px]">&gt;</span>
      <span className="ml-auto w-[148px] bg-[linear-gradient(90deg,#d4581a_90px,#f7c9b0_146px)] bg-clip-text py-2 text-transparent"><span className="ml-[-11px]">【已整理</span></span>
      <i className="ml-[16px] h-[36px] w-[1.500px] bg-[#c0683a]" />
      <Cross className="mr-[38px] ml-[16px]" size={33} />
    </div>
  );
}

function NavItem({ label, children }: { label: string; children: React.ReactNode }) {
  return (
    <div className="flex w-[201px] flex-col items-center pt-[9px]">
      <svg width="64" height="60" viewBox="0 0 64 60" fill="none" stroke="#5e5e5e" strokeWidth="3" strokeLinecap="round" strokeLinejoin="round">{children}</svg>
      <span className="mt-[19px] text-[35px]">{label}</span>
    </div>
  );
}

function BottomBar() {
  return (
    <div className="flex h-[177px] shrink-0 border-t-2 border-[#d4d4d4] bg-[#f7f8fa] leading-none whitespace-nowrap text-[#5e5e5e]">
      <div className="flex w-[275px] flex-col">
        <svg className="mt-[8px] ml-[127px]" width="22" height="8" viewBox="0 0 22 8"><path d="M0 8H22L11 0Z" fill="#77787c" /></svg>
        <span className="mt-[15px] ml-[68px] text-[39px] text-[#d23232]">3876.34</span>
        <div className="mt-[10px] ml-[41px] flex w-[222px] items-center justify-between">
          <span className="text-[35px]">上证</span>
          <span className="text-[37px] text-[#d23232]">0.37%</span>
        </div>
      </div>
      <NavItem label="交易">
        <path d="M17 7A28 28 0 0 1 57 41L62 36M57 41L55 37M48 52A28 28 0 0 1 7 18L1 21M7 18L9 24" />
        <path d="M24 18L32 28L40 18M32 28V45M23 29H41M23 37H41" />
      </NavItem>
      <NavItem label="发帖">
        <path d="M42 3H13Q6 3 6 10V49Q6 56 13 56H50Q57 56 57 49V19" />
        <path d="M25 38L28 29L49 9L53 13L33 33ZM52 6L56 2L60 6L56 9Z" fill="#5e5e5e" strokeWidth="1.500" />
      </NavItem>
      <NavItem label="功能">
        <rect x="7" y="5" width="22" height="22" rx="4" />
        <rect x="7" y="33" width="22" height="22" rx="4" />
        <rect x="35" y="33" width="22" height="22" rx="4" />
        <path d="M46 4L57.500 16L46 28L34.500 16Z" />
      </NavItem>
      <NavItem label="设自选">
        <circle cx="32" cy="30" r="27.500" />
        <g fill="#5e5e5e" stroke="none"><circle cx="20" cy="30" r="3" /><circle cx="32" cy="30" r="3" /><circle cx="44" cy="30" r="3" /></g>
      </NavItem>
    </div>
  );
}

export default function App() {
  return (
    <div lang="zh-CN" className="flex h-[2400px] w-[1080px] flex-col overflow-hidden bg-white [font-family:Roboto,'Noto_Sans_CJK_SC',sans-serif]">
      <StatusBar />
      <Header />
      <div className="flex h-[120px] shrink-0 items-center bg-[#fdeee5] text-[#d4581a]">
        <span className="ml-[36px] text-[42.200px] leading-none whitespace-nowrap">还在苦于没有资金加仓？融资额度随时支援&gt;&gt;</span>
        <Cross className="mr-[44px] ml-auto" size={33} />
      </div>
      <Quotes />
      <Notice />
      <Tabs />
      <Periods />
      <Averages />
      <div className="flex h-[1061px] shrink-0">
        <ChartPanel />
        <CostPanel />
      </div>
      <Promo />
      <div className="mt-[16px] flex h-[33px] shrink-0 items-end border-t-2 border-[#d8d8d8]">
        <svg className="block" width="1080" height="3" viewBox="0 0 1080 3" fill="#666">
          <path d="M223 1h4v2h-4zM369 0h4v3h-4zM561 1h4v2h-4zM695 0h3v3h-3zM822 0h4v3h-4zM847 1h4v2h-4zM953 0h4v3h-4zM1013 1h4v2h-4z" />
        </svg>
      </div>
      <BottomBar />
    </div>
  );
}
